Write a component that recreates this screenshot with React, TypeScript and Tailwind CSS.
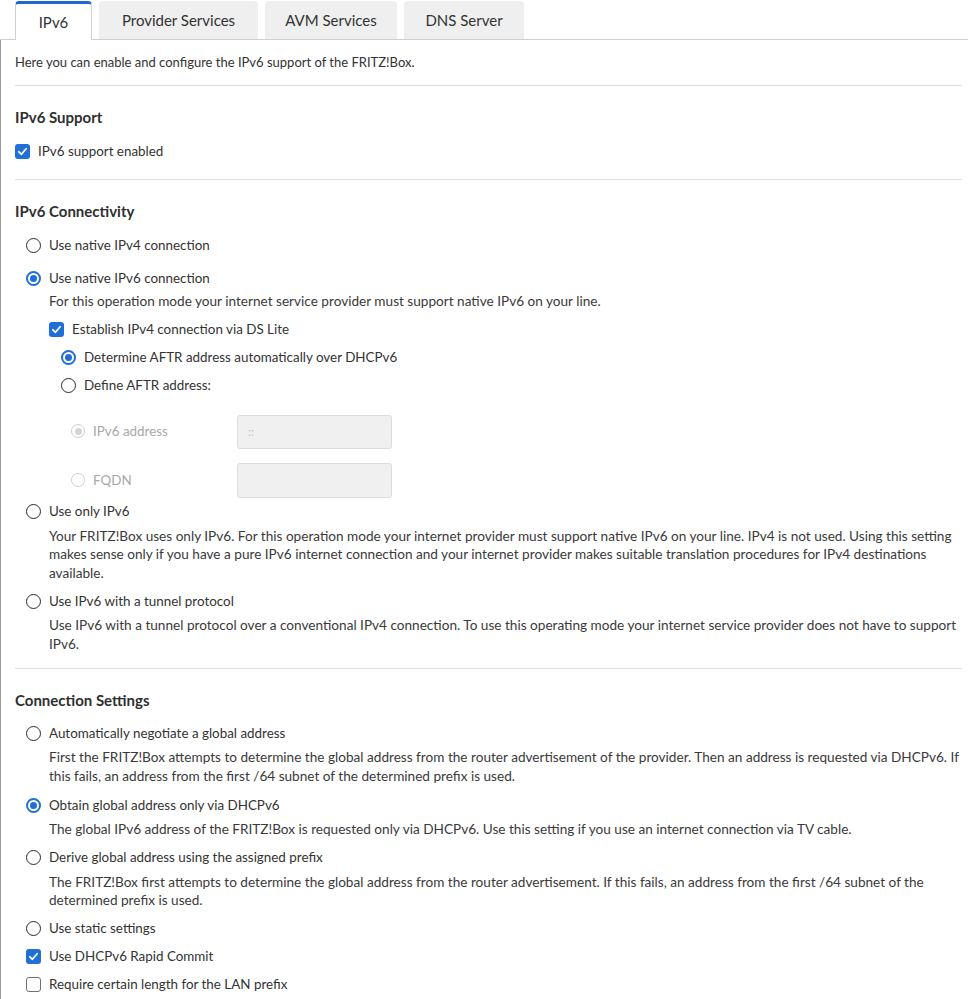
import type { ReactNode } from 'react';

function Radio({ checked, disabled }: { checked?: boolean; disabled?: boolean }) {
  if (disabled) {
    return (
      <span className="flex h-[14px] w-[14px] shrink-0 items-center justify-center rounded-full border border-[#cfcfcf] bg-white">
        {checked ? <span className="h-[7px] w-[7px] rounded-full bg-[#d4d4d4]" /> : null}
      </span>
    );
  }
  if (checked) {
    return (
      <span className="flex h-[15px] w-[15px] shrink-0 items-center justify-center rounded-full border-[2px] border-[#1f6fd6] bg-white">
        <span className="h-[7px] w-[7px] rounded-full bg-[#1f6fd6]" />
      </span>
    );
  }
  return <span className="h-[15px] w-[15px] shrink-0 rounded-full border-[1.5px] border-[#2b2b2b] bg-white" />;
}

function Check({ checked }: { checked?: boolean }) {
  if (!checked) {
    return <span className="h-[15px] w-[15px] shrink-0 rounded-[3px] border-[1.5px] border-[#707070] bg-white" />;
  }
  return (
    <span className="flex h-[15px] w-[15px] shrink-0 items-center justify-center rounded-[3px] bg-[#1f6fd6]">
      <svg width="11" height="11" viewBox="0 0 12 12" fill="none">
        <path d="M2 6.3 4.8 9 10 3" stroke="white" strokeWidth="1.9" strokeLinecap="round" strokeLinejoin="round" />
      </svg>
    </span>
  );
}

function Option({
  control,
  children,
  className,
}: {
  control: ReactNode;
  children: ReactNode;
  className?: string;
}) {
  return (
    <div className={`flex h-[18px] items-center gap-[8px] text-[13.4px] ${className ?? ''}`}>
      {control}
      <span className="whitespace-nowrap">{children}</span>
    </div>
  );
}

function Desc({ lines, className }: { lines: string[]; className?: string }) {
  return (
    <div className={`ml-[34px] text-[13.6px] leading-[18.5px] text-[#3a3a3a] ${className ?? ''}`}>
      {lines.map((l) => (
        <div key={l} className="whitespace-nowrap">
          {l}
        </div>
      ))}
    </div>
  );
}

function Heading({ children, className }: { children: ReactNode; className?: string }) {
  return <h2 className={`h-[20px] text-[15px] font-bold leading-[20px] text-[#2f2f2f] ${className ?? ''}`}>{children}</h2>;
}

const tabs = [
  { label: 'IPv6', w: 'w-[77px]', active: true },
  { label: 'Provider Services', w: 'w-[159px]' },
  { label: 'AVM Services', w: 'w-[132px]' },
  { label: 'DNS Server', w: 'w-[120px]' },
];

export default function App() {
  return (
    <div
      className="min-h-[999px] bg-white text-[14px] text-[#333]"
      style={{ fontFamily: 'Lato, "Noto Sans", sans-serif' }}
    >
      <div className="flex h-[40px] items-end gap-[7px] border-b border-[#cfcfcf] pl-[15px]">
        {tabs.map((t) =>
          t.active ? (
            <div
              key={t.label}
              className={`-mb-px flex h-[39px] ${t.w} items-center justify-center rounded-t-[4px] border-x border-t-[3px] border-x-[#d0d0d0] border-t-[#2267cf] bg-white text-[15px]`}
            >
              {t.label}
            </div>
          ) : (
            <div
              key={t.label}
              className={`flex h-[38px] ${t.w} items-center justify-center rounded-t-[4px] bg-[#efefef] text-[15px]`}
            >
              {t.label}
            </div>
          ),
        )}
      </div>

      <div className="border-l border-[#9a9a9a] pb-[20px] pl-[14px] pr-[6px] pt-[13px]">
        <div className="h-[18px] text-[13px] leading-[18px]">
          Here you can enable and configure the IPv6 support of the FRITZ!Box.
        </div>
        <div className="mt-[14px] h-px bg-[#dedede]" />

        <Heading className="mt-[21px]">IPv6 Support</Heading>
        <Option className="mt-[15px]" control={<Check checked />}>
          IPv6 support enabled
        </Option>
        <div className="mt-[19px] h-px bg-[#dedede]" />

        <Heading className="mt-[21px]">IPv6 Connectivity</Heading>
        <Option className="mt-[15px] pl-[11px]" control={<Radio />}>
          Use native IPv4 connection
        </Option>
        <Option className="mt-[15px] pl-[11px]" control={<Radio checked />}>
          Use native IPv6 connection
        </Option>
        <Desc
          className="mt-[5px]"
          lines={['For this operation mode your internet service provider must support native IPv6 on your line.']}
        />
        <Option className="mt-[10px] pl-[34px]" control={<Check checked />}>
          Establish IPv4 connection via DS Lite
        </Option>
        <Option className="mt-[10px] pl-[46px]" control={<Radio checked />}>
          Determine AFTR address automatically over DHCPv6
        </Option>
        <Option className="mt-[10px] pl-[46px]" control={<Radio />}>
          Define AFTR address:
        </Option>

        <div className="mt-[20px] flex h-[34px] items-center pl-[56px] text-[13.4px] text-[#a8a8a8]">
          <div className="flex w-[166px] items-center gap-[8px]">
            <Radio checked disabled />
            <span>IPv6 address</span>
          </div>
          <div className="flex h-[34px] w-[155px] items-center rounded-[3px] border border-[#dcdcdc] bg-[#f0f0f0] pl-[10px] text-[12px] text-[#c0c0c0]">
            ::
          </div>
        </div>
        <div className="mt-[14px] flex h-[35px] items-center pl-[56px] text-[13.4px] text-[#a8a8a8]">
          <div className="flex w-[166px] items-center gap-[8px]">
            <Radio disabled />
            <span>FQDN</span>
          </div>
          <div className="h-[35px] w-[155px] rounded-[3px] border border-[#dcdcdc] bg-[#f0f0f0]" />
        </div>

        <Option className="mt-[5px] pl-[11px]" control={<Radio />}>
          Use only IPv6
        </Option>
        <Desc
          className="mt-[6px]"
          lines={[
            'Your FRITZ!Box uses only IPv6. For this operation mode your internet provider must support native IPv6 on your line. IPv4 is not used. Using this setting',
            'makes sense only if you have a pure IPv6 internet connection and your internet provider makes suitable translation procedures for IPv4 destinations',
            'available.',
          ]}
        />
        <Option className="mt-[10px] pl-[11px]" control={<Radio />}>
          Use IPv6 with a tunnel protocol
        </Option>
        <Desc
          className="mt-[6px]"
          lines={[
            'Use IPv6 with a tunnel protocol over a conventional IPv4 connection. To use this operating mode your internet service provider does not have to support',
            'IPv6.',
          ]}
        />
        <div className="mt-[15px] h-px bg-[#dedede]" />

        <Heading className="mt-[21px]">Connection Settings</Heading>
        <Option className="mt-[14px] pl-[11px]" control={<Radio />}>
          Automatically negotiate a global address
        </Option>
        <Desc
          className="mt-[6px]"
          lines={[
            'First the FRITZ!Box attempts to determine the global address from the router advertisement of the provider. Then an address is requested via DHCPv6. If',
            'this fails, an address from the first /64 subnet of the determined prefix is used.',
          ]}
        />
        <Option className="mt-[11px] pl-[11px]" control={<Radio checked />}>
          Obtain global address only via DHCPv6
        </Option>
        <Desc
          className="mt-[6px]"
          lines={[
            'The global IPv6 address of the FRITZ!Box is requested only via DHCPv6. Use this setting if you use an internet connection via TV cable.',
          ]}
        />
        <Option className="mt-[10px] pl-[11px]" control={<Radio />}>
          Derive global address using the assigned prefix
        </Option>
        <Desc
          className="mt-[6px]"
          lines={[
            'The FRITZ!Box first attempts to determine the global address from the router advertisement. If this fails, an address from the first /64 subnet of the',
            'determined prefix is used.',
          ]}
        />
        <Option className="mt-[10px] pl-[11px]" control={<Radio />}>
          Use static settings
        </Option>
        <Option className="mt-[10px] pl-[11px]" control={<Check checked />}>
          Use DHCPv6 Rapid Commit
        </Option>
        <Option className="mt-[10px] pl-[11px]" control={<Check />}>
          Require certain length for the LAN prefix
        </Option>
      </div>
    </div>
  );
}
